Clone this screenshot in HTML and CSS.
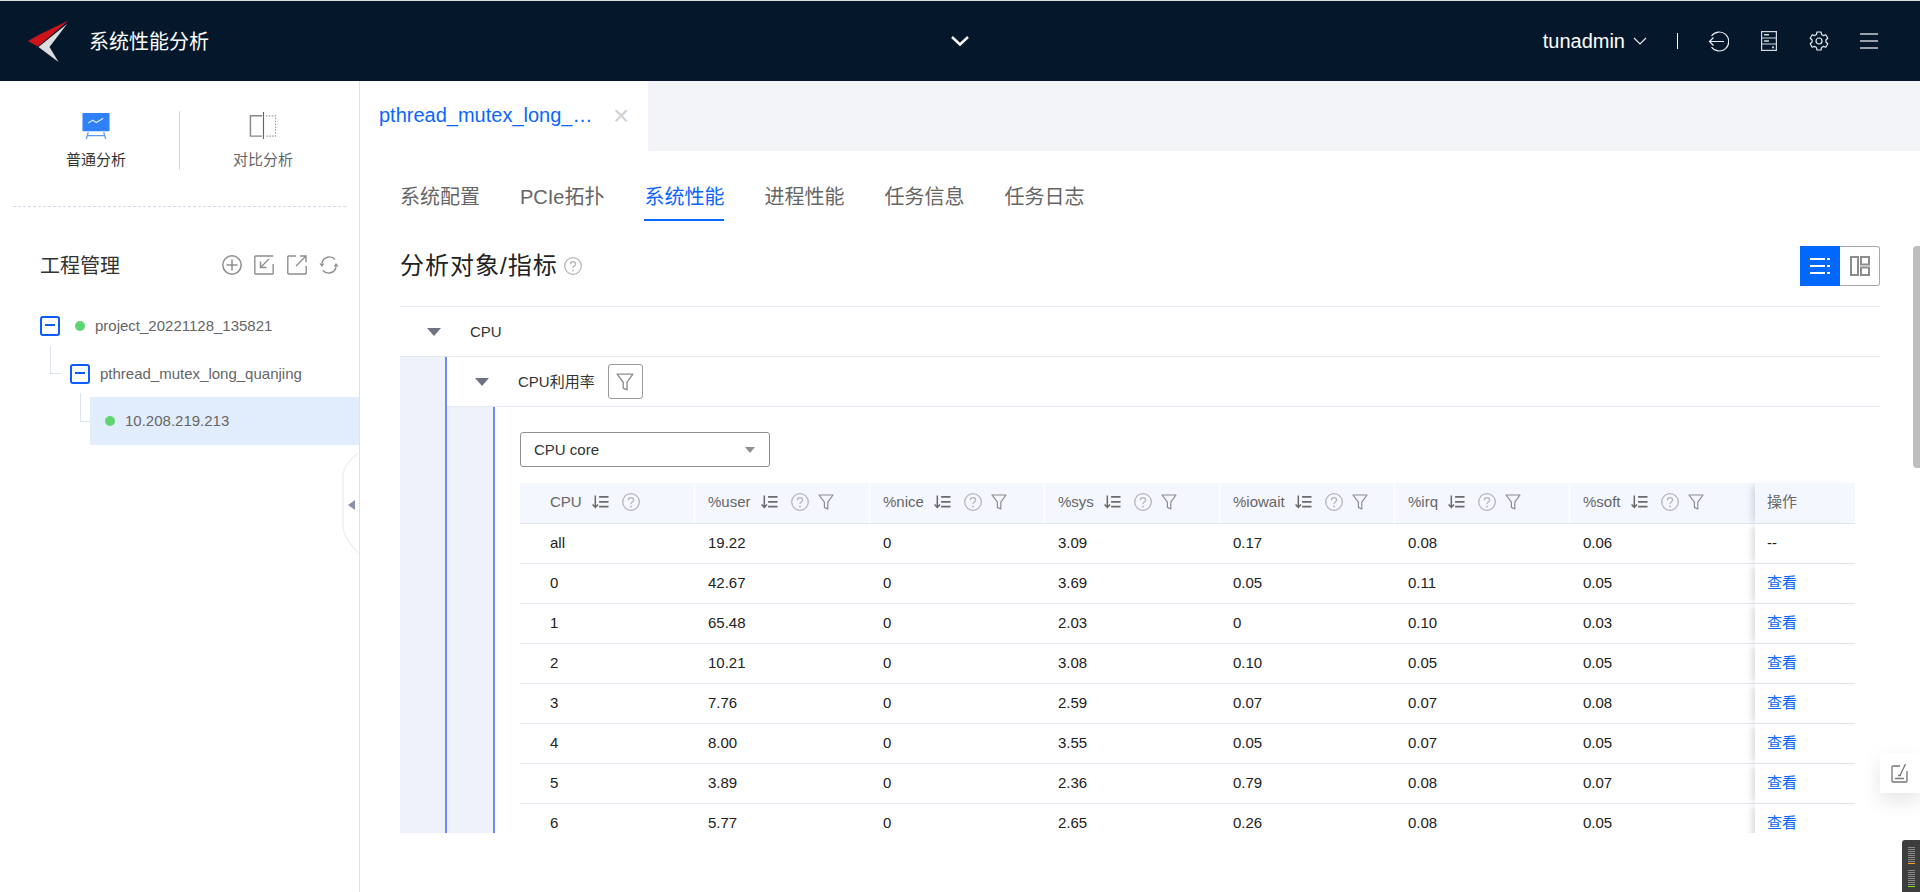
FILE: index.html
```html
<!DOCTYPE html>
<html lang="zh-CN">
<head>
<meta charset="utf-8">
<title>系统性能分析</title>
<link rel="stylesheet" href="styles.css">
</head>
<body>
<svg class="defs" width="0" height="0" aria-hidden="true">
  <symbol id="i-help" viewBox="0 0 18 18"><circle cx="9" cy="9" r="8.300" fill="none" stroke="currentColor" stroke-width="1.300"/><path d="M6.400 7.200c0-1.600 1.200-2.500 2.600-2.500s2.600.9 2.600 2.300c0 2-2.600 2-2.600 4" fill="none" stroke="currentColor" stroke-width="1.300"/><circle cx="9" cy="13.500" r=".9" fill="currentColor"/></symbol>
  <symbol id="i-sort" viewBox="0 0 18 14"><path d="M3.500 0v12.500M.6 9.600l2.900 3 2.900-3" fill="none" stroke="currentColor" stroke-width="1.600"/><path d="M7.500 1.500h10M7.500 6.800h10M7.500 12h10" stroke="currentColor" stroke-width="1.800"/></symbol>
  <symbol id="i-filter" viewBox="0 0 16 16"><path d="M1 1h14L9.800 8.200V15l-3.400-1.600V8.200z" fill="none" stroke="currentColor" stroke-width="1.200" stroke-linejoin="round"/></symbol>
</svg>

<header class="topbar">
  <div class="brand">
    <svg class="logo" width="44" height="44" viewBox="26 19 44 44"><path d="M68.500 20.500 39.500 34.500 28 41l10 5.500z" fill="#d0121b"/><path d="M67 24 38.500 47 58.500 62 49.500 47z" fill="#dcdde0"/></svg>
    <span class="brand-name">系统性能分析</span>
  </div>
  <svg class="center-chevron" width="20" height="12" viewBox="0 0 20 12"><path d="M2 2l8 7.500L18 2" fill="none" stroke="#fff" stroke-width="2.400"/></svg>
  <div class="top-actions">
    <span class="user">tunadmin</span>
    <svg class="user-chevron" width="14" height="8" viewBox="0 0 14 8"><path d="M1 1l6 6 6-6" fill="none" stroke="#e8ebef" stroke-width="1.200"/></svg>
    <span class="top-divider"></span>
    <svg class="top-icon exit" width="21" height="21" viewBox="0 0 21 21" fill="none" stroke="#e8ebef" stroke-width="1.200"><path d="M3.500 5a9.500 9.500 0 1 1 0 11"/><path d="M16 10.500H1.500M5.500 6.500l-4 4 4 4"/></svg>
    <svg class="top-icon server" width="16" height="20" viewBox="0 0 16 20" fill="none" stroke="#d5d9de" stroke-width="1.200"><rect x=".6" y=".6" width="14.800" height="18.800"/><path d="M.6 7h14.800M.6 13h14.800"/><path d="M3 3.800h5M3 10h5" stroke-width="1.500"/><path d="M11 16.300h2" stroke-width="1.800"/></svg>
    <svg class="top-icon gear" width="20" height="20" viewBox="0 0 20 20" fill="none" stroke="#e8ebef" stroke-width="1.200" stroke-linejoin="round"><path d="M8 1h4l.6 2.600 1.700 1 2.500-.8 2 3.400L16.900 9v2l1.900 1.800-2 3.400-2.500-.8-1.700 1L12 19H8l-.6-2.600-1.700-1-2.500.8-2-3.400L3.100 11V9L1.200 7.200l2-3.400 2.500.8 1.700-1z"/><circle cx="10" cy="10" r="3"/></svg>
    <svg class="top-icon menu" width="18" height="16" viewBox="0 0 18 16" stroke="#c9cdd2" stroke-width="1.400"><path d="M0 1h18M0 8h18M0 15h18"/></svg>
  </div>
</header>

<div class="layout">
  <aside class="sidebar">
    <div class="modes">
      <div class="mode active">
        <svg width="30" height="30" viewBox="0 0 30 30"><rect x="1" y="2" width="28" height="19" rx="1" fill="#2f80fb"/><path d="M7 12.500l4.500-3 4 2.500 7-4.500" fill="none" stroke="#d7e7ff" stroke-width="1.300"/><path d="M7 22l-2 7M23 22l2 7M6 25.500h18" fill="none" stroke="#5a9bfc" stroke-width="1.300"/></svg>
        <span>普通分析</span>
      </div>
      <span class="mode-divider"></span>
      <div class="mode">
        <svg width="30" height="30" viewBox="0 0 30 30" fill="none"><path d="M14 5H2v21h12" stroke="#888" stroke-width="1.500"/><path d="M15.500 1v28" stroke="#666" stroke-width="1.200"/><path d="M18 5h10v21H18" stroke="#999" stroke-width="1.200" stroke-dasharray="1.500 1.500"/></svg>
        <span>对比分析</span>
      </div>
    </div>
    <div class="dash"></div>
    <div class="proj-head">
      <h2>工程管理</h2>
      <div class="proj-tools">
        <svg width="20" height="20" viewBox="0 0 20 20" fill="none" stroke="#8e8e8e" stroke-width="1.500"><circle cx="10" cy="10" r="9.200"/><path d="M10 4.500v11M4.500 10h11"/></svg>
        <svg width="20" height="20" viewBox="0 0 20 20" fill="none" stroke="#8e8e8e" stroke-width="1.400"><path d="M19.200 1H1.500a.7.7 0 0 0-.7.700v16.600c0 .4.300.7.700.7h17a.7.700 0 0 0 .7-.7V9"/><path d="M15 4L6.500 12.500M6.500 6.500v6h6"/></svg>
        <svg width="20" height="20" viewBox="0 0 20 20" fill="none" stroke="#8e8e8e" stroke-width="1.400"><path d="M9 1H1.500a.7.7 0 0 0-.7.700v16.600c0 .4.300.7.700.7h17a.7.700 0 0 0 .7-.7V11"/><path d="M19 1L9 11M13 1h6v6" /></svg>
        <svg width="20" height="20" viewBox="0 0 20 20" fill="none" stroke="#8e8e8e" stroke-width="1.400"><path d="M3 8a7.500 7.500 0 0 1 13-3.500M17 12a7.500 7.500 0 0 1-13 3.500"/><path d="M.4 8.500h5L3 12zM14.600 11.500h5L17 8z" fill="#8e8e8e" stroke="none"/></svg>
      </div>
    </div>
    <div class="ptree">
      <div class="pnode lvl1"><span class="minus"></span><span class="dot"></span><span class="ptext">project_20221128_135821</span></div>
      <div class="pnode lvl2"><span class="minus"></span><span class="ptext">pthread_mutex_long_quanjing</span></div>
      <div class="pnode lvl3"><span class="dot"></span><span class="ptext">10.208.219.213</span></div>
    </div>
    <svg class="handle" width="17" height="106" viewBox="0 0 17 106" fill="none"><path d="M16 3C10 9 1 16 1 26v50c0 10 9 20 15 27" stroke="#eef0f5" stroke-width="1.500"/><path d="M13 50v10l-7-5z" fill="#8a92a8"/></svg>
  </aside>

  <main class="main">
    <div class="tabstrip">
      <div class="tab"><span class="tab-name">pthread_mutex_long_…</span><span class="tab-close">×</span></div>
    </div>
    <nav class="subnav">
      <a>系统配置</a><a>PCIe拓扑</a><a class="on">系统性能</a><a>进程性能</a><a>任务信息</a><a>任务日志</a>
    </nav>
    <div class="section-head">
      <h1>分析对象/指标</h1>
      <svg class="title-help" width="18" height="18"><use href="#i-help"/></svg>
      <div class="view-toggle">
        <span class="vt on"><svg width="20" height="18" viewBox="0 0 20 18" stroke="#fff" stroke-width="2"><path d="M0 2h15M17 2h3M0 9h15M17 9h3M0 16h15M17 16h3"/></svg></span>
        <span class="vt"><svg width="20" height="20" viewBox="0 0 20 20" fill="none" stroke="#8c8c8c" stroke-width="2"><rect x="1" y="1" width="7" height="18"/><rect x="11" y="1" width="8" height="7.500"/><rect x="11" y="11.500" width="8" height="7.500"/></svg></span>
      </div>
    </div>

    <section class="tree">
      <div class="tree-row"><i class="caret"></i><span>CPU</span></div>
      <div class="level">
        <div class="gutter"></div>
        <div class="level-body">
          <div class="tree-row sub"><i class="caret"></i><span>CPU利用率</span>
            <button class="filter-btn"><svg width="18" height="18"><use href="#i-filter"/></svg></button>
          </div>
          <div class="level inner">
            <div class="gutter"></div>
            <div class="level-body pad">
              <div class="select"><span>CPU core</span><i class="select-caret"></i></div>
              <table class="grid">
                <colgroup><col class="c1"><col class="cn"><col class="cn"><col class="cn"><col class="cn"><col class="cn"><col class="cl"><col class="cg"><col class="co"></colgroup>
                <thead>
                  <tr>
                    <th class="first"><div class="th"><span>CPU</span><svg class="s"><use href="#i-sort"/></svg><svg class="h"><use href="#i-help"/></svg></div></th>
                    <th><div class="th"><span>%user</span><svg class="s"><use href="#i-sort"/></svg><svg class="h"><use href="#i-help"/></svg><svg class="f"><use href="#i-filter"/></svg></div></th>
                    <th><div class="th"><span>%nice</span><svg class="s"><use href="#i-sort"/></svg><svg class="h"><use href="#i-help"/></svg><svg class="f"><use href="#i-filter"/></svg></div></th>
                    <th><div class="th"><span>%sys</span><svg class="s"><use href="#i-sort"/></svg><svg class="h"><use href="#i-help"/></svg><svg class="f"><use href="#i-filter"/></svg></div></th>
                    <th><div class="th"><span>%iowait</span><svg class="s"><use href="#i-sort"/></svg><svg class="h"><use href="#i-help"/></svg><svg class="f"><use href="#i-filter"/></svg></div></th>
                    <th><div class="th"><span>%irq</span><svg class="s"><use href="#i-sort"/></svg><svg class="h"><use href="#i-help"/></svg><svg class="f"><use href="#i-filter"/></svg></div></th>
                    <th><div class="th"><span>%soft</span><svg class="s"><use href="#i-sort"/></svg><svg class="h"><use href="#i-help"/></svg><svg class="f"><use href="#i-filter"/></svg></div></th>
                    <th class="gap"></th>
                    <th class="op">操作</th>
                  </tr>
                </thead>
                <tbody>
                  <tr><td class="first">all</td><td>19.22</td><td>0</td><td>3.09</td><td>0.17</td><td>0.08</td><td>0.06</td><td class="gap"></td><td class="op">--</td></tr>
                  <tr><td class="first">0</td><td>42.67</td><td>0</td><td>3.69</td><td>0.05</td><td>0.11</td><td>0.05</td><td class="gap"></td><td class="op"><a>查看</a></td></tr>
                  <tr><td class="first">1</td><td>65.48</td><td>0</td><td>2.03</td><td>0</td><td>0.10</td><td>0.03</td><td class="gap"></td><td class="op"><a>查看</a></td></tr>
                  <tr><td class="first">2</td><td>10.21</td><td>0</td><td>3.08</td><td>0.10</td><td>0.05</td><td>0.05</td><td class="gap"></td><td class="op"><a>查看</a></td></tr>
                  <tr><td class="first">3</td><td>7.76</td><td>0</td><td>2.59</td><td>0.07</td><td>0.07</td><td>0.08</td><td class="gap"></td><td class="op"><a>查看</a></td></tr>
                  <tr><td class="first">4</td><td>8.00</td><td>0</td><td>3.55</td><td>0.05</td><td>0.07</td><td>0.05</td><td class="gap"></td><td class="op"><a>查看</a></td></tr>
                  <tr><td class="first">5</td><td>3.89</td><td>0</td><td>2.36</td><td>0.79</td><td>0.08</td><td>0.07</td><td class="gap"></td><td class="op"><a>查看</a></td></tr>
                  <tr><td class="first">6</td><td>5.77</td><td>0</td><td>2.65</td><td>0.26</td><td>0.08</td><td>0.05</td><td class="gap"></td><td class="op"><a>查看</a></td></tr>
                </tbody>
              </table>
            </div>
          </div>
        </div>
      </div>
    </section>

    <div class="scrollthumb"></div>
    <div class="float-btn"><svg width="18" height="20" viewBox="0 0 18 20" fill="none" stroke="#777" stroke-width="1.300"><path d="M9 3H2a1 1 0 0 0-1 1v14a1 1 0 0 0 1 1h13a1 1 0 0 0 1-1V8"/><path d="M9 12.500L14.500 1"/><path d="M4 15.500h9M7 12.500h3" /></svg></div>
    <div class="meter">
      <div class="meter-group"><i></i><i></i><i></i><i></i><i></i><i></i><i></i><i></i><i class="amber"></i></div>
      <div class="meter-group"><i></i><i></i><i></i><i></i><i></i><i></i><i></i><i></i><i class="green"></i></div>
    </div>
  </main>
</div>
</body>
</html>
```

FILE: styles.css
```css
* { box-sizing: border-box; }
html, body { margin: 0; height: 100%; overflow: hidden; }
body {
  font-family: "Liberation Sans", "Noto Sans CJK SC", sans-serif;
  font-size: 15px;
  color: #222;
  background: #fff;
  border-top: 1px solid #dcdcdc;
}
.defs { position: absolute; }

.topbar {
  height: 80px;
  background: #05182b;
  display: grid;
  grid-template-columns: 1fr auto 1fr;
  align-items: center;
  color: #fff;
}
.brand { display: flex; align-items: center; padding-left: 26px; }
.logo { display: block; }
.brand-name { margin: 2px 0 0 19px; font-size: 20px; line-height: 28px; }
.center-chevron { display: block; }
.top-actions { display: flex; align-items: center; justify-content: flex-end; padding-right: 42px; }
.user { font-size: 20px; line-height: 28px; }
.user-chevron { margin-left: 8px; }
.top-divider { width: 1px; height: 16px; background: #fff; margin-left: 30px; }
.top-icon { display: block; }
.exit { margin-left: 30px; }
.server { margin-left: 32px; }
.gear { margin-left: 32px; }
.menu { margin-left: 31px; }

.layout { display: flex; height: 811px; }

.sidebar {
  position: relative;
  width: 360px;
  flex: none;
  border-right: 1px solid #dfe1ea;
}
.modes { display: flex; align-items: stretch; margin: 30px 13px 0; height: 59px; }
.mode {
  flex: 1;
  display: flex;
  flex-direction: column;
  align-items: center;
  color: #666;
  font-size: 15px;
  line-height: 20px;
}
.mode svg { display: block; margin-bottom: 10px; }
.mode.active { color: #333; }
.mode-divider { width: 1px; background: #d5d8e2; }
.dash { margin: 36px 13px 0; border-top: 1px dashed #d3dbe6; }
.proj-head { display: flex; align-items: center; height: 30px; margin-top: 43px; padding: 0 20px 0 40px; }
.proj-head h2 { margin: 2px 0 0; font-size: 20px; font-weight: 400; line-height: 30px; color: #333; }
.proj-tools { margin-left: auto; display: flex; gap: 12.500px; }
.proj-tools svg { display: block; }

.ptree { margin-top: 22px; }
.pnode {
  position: relative;
  display: flex;
  align-items: center;
  color: #666;
  font-size: 15px;
  line-height: 20px;
}
.lvl1 { height: 48px; padding-left: 40px; }
.lvl2 { height: 47px; padding-left: 70px; }
.lvl3 { height: 48px; margin-left: 90px; padding-left: 15px; background: #e1edfc; }
.lvl1 .dot { margin-left: 15px; }
.ptext { margin-left: 10px; }
.minus {
  position: relative;
  width: 20px;
  height: 20px;
  border: 2px solid #0a5cff;
  border-radius: 3px;
  background: #fff;
  flex: none;
}
.minus::after {
  content: "";
  position: absolute;
  left: 3px;
  right: 3px;
  top: 6px;
  height: 2px;
  background: #0a5cff;
}
.dot { width: 10px; height: 10px; border-radius: 50%; background: #5fd572; flex: none; }
.lvl2::before {
  content: "";
  position: absolute;
  left: 50px;
  top: -4px;
  width: 10px;
  height: 27px;
  border-left: 1px solid #dde3ee;
  border-bottom: 1px solid #dde3ee;
}
.lvl3::before {
  content: "";
  position: absolute;
  left: -10px;
  top: -4px;
  width: 10px;
  height: 28px;
  border-left: 1px solid #dde3ee;
  border-bottom: 1px solid #dde3ee;
}
.handle { position: absolute; left: 342px; top: 369px; display: block; }

.main { position: relative; flex: 1; min-width: 0; }
.tabstrip { height: 70px; background: #f3f4f8; display: flex; }
.tab { width: 288px; background: #fff; display: flex; align-items: center; padding-left: 19px; font-size: 20px; color: #0a66ff; }
.tab-name { width: 214px; white-space: nowrap; line-height: 28px; margin-top: -3px; }
.tab-close { margin-left: 20px; font-size: 28px; line-height: 28px; color: #d2d2d2; }

.subnav { display: flex; gap: 40px; margin: 31px 40px 0; font-size: 20px; color: #666; }
.subnav a { display: block; line-height: 28px; padding: 1px 0 8px; border-bottom: 2px solid transparent; }
.subnav a.on { color: #0a66ff; border-bottom-color: #0a66ff; }

.section-head { display: flex; align-items: center; height: 40px; margin: 25px 40px 20px; }
.section-head h1 { margin: 0; font-size: 24px; font-weight: 400; line-height: 40px; letter-spacing: 1px; color: #222; }
.title-help { margin-left: 6px; color: #b5b5b5; }
.view-toggle { margin-left: auto; display: flex; }
.vt {
  width: 40px;
  height: 40px;
  display: flex;
  align-items: center;
  justify-content: center;
  border: 1px solid #a8a8a8;
  border-left: 0;
  border-radius: 0 3px 3px 0;
}
.vt.on { background: #0067ff; border: 0; border-radius: 0; }

.tree { margin: 0 40px; height: 527px; overflow: hidden; border-top: 1px solid #e6e9f2; }
.tree-row { display: flex; align-items: center; height: 49px; padding-left: 27px; color: #333; }
.tree-row > span { margin-left: 29px; }
.caret { width: 0; height: 0; border-style: solid; border-width: 8px 7px 0; border-color: #6f7483 transparent transparent; }
.level { display: flex; border-top: 1px solid #e6e9f2; }
.gutter { width: 47px; flex: none; background: #eff2fb; border-right: 2px solid #6b8cf5; }
.level-body { flex: 1; min-width: 0; }
.sub { padding-left: 28px; }
.sub > span { margin: 0 0 2px 29px; }
.filter-btn {
  width: 35px;
  height: 35px;
  margin-left: 13px;
  padding: 0;
  display: flex;
  align-items: center;
  justify-content: center;
  background: #fff;
  border: 1px solid #999;
  border-radius: 3px;
  color: #8c8c8c;
}
.inner .gutter { width: 48px; }
.pad { padding: 25px 25px 0 25px; }
.select {
  width: 250px;
  height: 35px;
  display: flex;
  align-items: center;
  padding: 0 14px 0 13px;
  border: 1px solid #8f8f8f;
  border-radius: 3px;
  color: #333;
}
.select-caret { margin-left: auto; width: 0; height: 0; border-style: solid; border-width: 6px 5px 0; border-color: #8f8f8f transparent transparent; }

.grid { margin-top: 16px; width: 1335px; table-layout: fixed; border-collapse: separate; border-spacing: 0; }
.c1 { width: 174px; }
.cn { width: 175px; }
.cl { width: 176px; }
.cg { width: 10px; }
.co { width: 100px; }
.grid th, .grid td { height: 40px; padding: 0 0 2px 14px; text-align: left; font-weight: 400; border-bottom: 1px solid #e4e6ef; }
.grid th { height: 41px; padding-bottom: 3px; background: #f4f7fe; color: #666; border-left: 1px solid #fff; padding-left: 13px; }
.grid td { color: #222; }
.grid .first { padding-left: 30px; border-left: 0; }
.grid .gap { padding-left: 0; border-left: 0; }
.grid .op { padding-left: 12px; position: relative; background: #fff; box-shadow: -6px 0 6px -3px rgba(90, 95, 110, .22); border-left: 0; }
.grid th.op { padding-bottom: 5px; background: #f4f7fe; }
.grid td.op a { display: block; margin-top: -2px; color: #0a66ff; }
.th { display: flex; align-items: center; }
.th svg { flex: none; display: block; }
.th .s { width: 17px; height: 14px; margin-left: 10px; color: #6b6b6b; }
.th .h { width: 18px; height: 18px; margin-left: 13px; color: #b5b5b5; }
.th .f { width: 16px; height: 16px; margin-left: 9px; color: #8c8c8c; }

.scrollthumb { position: absolute; right: 0; top: 165px; width: 7px; height: 222px; background: #bdbdbd; border-radius: 4px 0 0 4px; }
.float-btn {
  position: absolute;
  right: 0;
  top: 672px;
  width: 40px;
  height: 40px;
  display: flex;
  align-items: center;
  justify-content: center;
  background: #fff;
  box-shadow: 0 8px 20px rgba(0, 0, 0, .1);
}
.meter {
  position: absolute;
  right: 0;
  top: 759px;
  width: 18px;
  height: 52px;
  padding: 7px 0 0 6px;
  background: #3d3d3d;
  border-radius: 3px 0 0 0;
}
.meter-group { width: 7px; display: flex; flex-direction: column; margin-bottom: 5px; }
.meter-group i { display: block; height: 1px; background: #8a8a8a; margin-bottom: 1px; }
.meter-group i.amber { background: #ffa12b; }
.meter-group i.green { background: #7fe313; }
```
